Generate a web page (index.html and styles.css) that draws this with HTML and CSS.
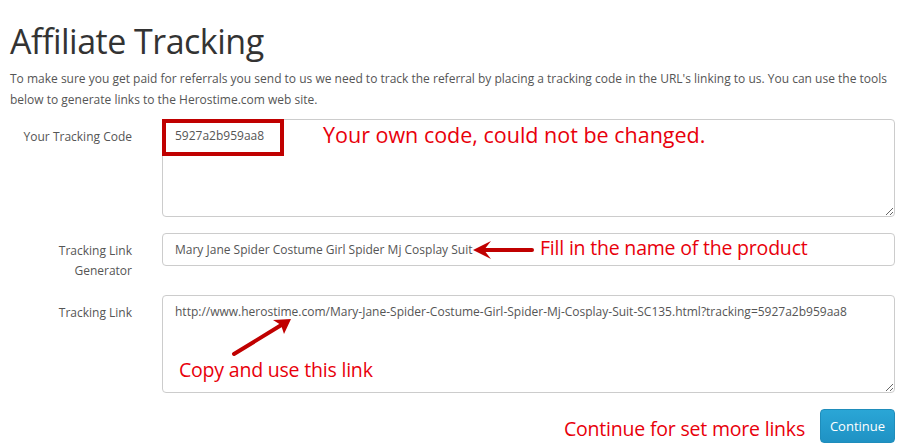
FILE: index.html
```html
<!DOCTYPE html>
<html>
<head>
<meta charset="utf-8">
<link rel="stylesheet" href="styles.css">
</head>
<body>
<div class="page">
  <h1 class="title">Affiliate Tracking</h1>
  <p class="intro">To make sure you get paid for referrals you send to us we need to track the referral by placing a tracking code in the URL's linking to us. You can use the tools below to generate links to the Herostime.com web site.</p>
  <form class="form">
    <div class="row">
      <label class="label">Your Tracking Code</label>
      <div class="field">
        <textarea class="control area" readonly>5927a2b959aa8</textarea>
        <div class="code-box"></div>
        <div class="note note-code">Your own code, could not be changed.</div>
      </div>
    </div>
    <div class="row">
      <label class="label">Tracking Link<br>Generator</label>
      <div class="field">
        <input class="control input" type="text" value="Mary Jane Spider Costume Girl Spider Mj Cosplay Suit">
        <svg class="arrow arrow-left" width="64" height="20" viewBox="0 0 64 20">
          <path d="M60 10 L10 10" stroke="#c00000" stroke-width="4" stroke-linecap="round" fill="none"/>
          <path d="M1 10 L19 1 L12 10 L19 19 Z" fill="#c00000"/>
        </svg>
        <div class="note note-fill">Fill in the name of the product</div>
      </div>
    </div>
    <div class="row">
      <label class="label">Tracking Link</label>
      <div class="field">
        <textarea class="control area" readonly>http://www.herostime.com/Mary-Jane-Spider-Costume-Girl-Spider-Mj-Cosplay-Suit-SC135.html?tracking=5927a2b959aa8</textarea>
        <svg class="arrow arrow-diag" width="62" height="40" viewBox="0 0 62 40">
          <path d="M3 37 L52 7" stroke="#c00000" stroke-width="4" stroke-linecap="round" fill="none"/>
          <path d="M60 2 L42 3 L50 8 L53 17 Z" fill="#c00000"/>
        </svg>
        <div class="note note-copy">Copy and use this link</div>
      </div>
    </div>
    <div class="actions">
      <span class="note-inline">Continue for set more links</span>
      <button type="button" class="btn">Continue</button>
    </div>
  </form>
</div>
</body>
</html>
```
FILE: styles.css
```css
html, body {
  margin: 0;
  padding: 0;
  background: #fff;
}
body {
  font-family: "Open Sans", "Noto Sans", sans-serif;
  color: #555;
}
.page {
  padding: 0 11px 0 10px;
}
.title {
  margin: 0;
  padding-top: 17px;
  font-size: 34px;
  font-weight: 400;
  line-height: 48px;
  color: #333;
  letter-spacing: -0.5px;
}
.intro {
  margin: 3px 0 9px;
  font-size: 12px;
  line-height: 21px;
  color: #555;
}
.row {
  display: grid;
  grid-template-columns: 122px 1fr;
  column-gap: 30px;
  margin-bottom: 16px;
  align-items: start;
}
.label {
  text-align: right;
  font-size: 12px;
  line-height: 20px;
  padding-top: 8px;
  margin-bottom: -2px;
  color: #555;
}
.field {
  position: relative;
}
.control {
  display: block;
  width: 100%;
  box-sizing: border-box;
  border: 1px solid #ccc;
  border-radius: 4px;
  padding: 6px 12px;
  font-family: "Open Sans", "Noto Sans", sans-serif;
  font-size: 12px;
  line-height: 20px;
  color: #555;
  background: #fff;
  margin: 0;
  outline: none;
}
.area {
  height: 98px;
  resize: vertical;
}
.input {
  height: 33px;
}
.code-box {
  position: absolute;
  left: 0;
  top: 0;
  width: 122px;
  height: 37px;
  box-sizing: border-box;
  border: 4px solid #c00000;
}
.note {
  position: absolute;
  color: #e8000b;
  font-family: "Open Sans", "Noto Sans", sans-serif;
  font-size: 19.5px;
  line-height: 26px;
  white-space: nowrap;
  letter-spacing: -0.2px;
}
.note-code {
  left: 161px;
  top: 3px;
  font-size: 21.5px;
  letter-spacing: 0;
}
.note-fill {
  left: 378px;
  top: 2px;
}
.note-copy {
  left: 17px;
  top: 62px;
}
.arrow {
  position: absolute;
}
.arrow-left {
  left: 310px;
  top: 7px;
}
.arrow-diag {
  left: 69px;
  top: 22px;
}
.actions {
  display: flex;
  justify-content: flex-end;
  align-items: center;
  gap: 15px;
}
.note-inline {
  color: #e8000b;
  font-size: 19.5px;
  letter-spacing: -0.2px;
  padding-top: 4px;
}
.btn {
  height: 34px;
  width: 75px;
  padding: 0;
  border: 1px solid #1f8dbb;
  border-radius: 4px;
  background: linear-gradient(#2aa6d6, #1f92c4);
  color: #fff;
  font-family: "Open Sans", "Noto Sans", sans-serif;
  font-size: 13px;
}
```
